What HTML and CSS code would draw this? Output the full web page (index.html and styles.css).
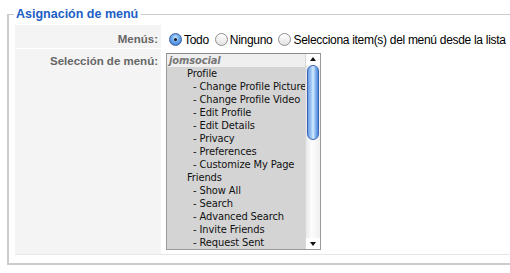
FILE: index.html
```html
<!DOCTYPE html>
<html lang="es">
<head>
<meta charset="utf-8">
<link rel="stylesheet" href="styles.css">
</head>
<body>
<fieldset class="panel">
  <legend class="panel-title">Asignación de menú</legend>
  <div class="form">
    <div class="label">Menús:</div>
    <div class="value radios">
      <span class="radio checked"></span><span class="rtext">Todo</span>
      <span class="radio"></span><span class="rtext">Ninguno</span>
      <span class="radio"></span><span class="rtext">Selecciona item(s) del menú desde la lista</span>
    </div>
    <div class="label label-tall">Selección de menú:</div>
    <div class="value">
      <div class="listbox">
        <div class="options">
          <div class="group">jomsocial</div>
          <div class="opt l1">Profile</div>
          <div class="opt l2">- Change Profile Picture</div>
          <div class="opt l2">- Change Profile Video</div>
          <div class="opt l2">- Edit Profile</div>
          <div class="opt l2">- Edit Details</div>
          <div class="opt l2">- Privacy</div>
          <div class="opt l2">- Preferences</div>
          <div class="opt l2">- Customize My Page</div>
          <div class="opt l1">Friends</div>
          <div class="opt l2">- Show All</div>
          <div class="opt l2">- Search</div>
          <div class="opt l2">- Advanced Search</div>
          <div class="opt l2">- Invite Friends</div>
          <div class="opt l2">- Request Sent</div>
        </div>
        <div class="scrollbar">
          <div class="arrow up"></div>
          <div class="track"><div class="thumb"></div></div>
          <div class="arrow down"></div>
        </div>
      </div>
    </div>
  </div>
</fieldset>
</body>
</html>
```
FILE: styles.css
```css
html, body {
  margin: 0;
  padding: 0;
  background: #fff;
}
body {
  font-family: "Liberation Sans", Arial, sans-serif;
  width: 510px;
  height: 273px;
  overflow: hidden;
}
.panel {
  margin: 7px 0 0 7px;
  padding: 4px 0 8px 6px;
  border: 0;
  border-top: 1px solid #cccccc;
  border-left: 2px solid #cccccc;
  border-bottom: 2px solid #cccccc;
  width: 520px;
  box-sizing: border-box;
  min-width: 0;
}
.panel-title {
  font-size: 12.5px;
  font-weight: bold;
  color: #1c5ec6;
  padding: 0 3px 0 2px;
  margin-left: -1px;
}
.form {
  display: grid;
  grid-template-columns: 146px 1fr;
  row-gap: 1px;
  column-gap: 1px;
  border-bottom: 1px solid #e6e6e6;
}
.label {
  background: #f4f4f4;
  color: #666;
  font-weight: bold;
  font-size: 11.5px;
  text-align: right;
  padding-right: 3px;
  height: 23px;
  line-height: 29px;
}
.label-tall {
  height: 205px;
  line-height: 24px;
}
.value {
  padding-left: 4px;
}
.radios {
  display: flex;
  align-items: center;
  font-size: 12px;
  letter-spacing: -0.3px;
  color: #000;
  padding-left: 7px;
  height: 23px;
  padding-top: 6px;
  box-sizing: border-box;
  white-space: nowrap;
}
.radio {
  width: 13px;
  height: 13px;
  border-radius: 50%;
  border: 1px solid #8e8e8e;
  background: linear-gradient(#ffffff, #e2e2e2);
  box-sizing: border-box;
  margin-right: 2px;
  position: relative;
  flex: none;
}
.radio.checked {
  border-color: #3a5f9a;
  background: radial-gradient(circle at 50% 35%, #c9e3ff 0, #6aa7ec 45%, #2f6fd0 100%);
}
.radio.checked::after {
  content: "";
  position: absolute;
  left: 4px;
  top: 4px;
  width: 3px;
  height: 3px;
  border-radius: 50%;
  background: #1a1a1a;
}
.rtext {
  margin-right: 6px;
}
.listbox {
  margin-top: 4px;
  width: 155px;
  height: 197px;
  border: 1px solid #9a9a9a;
  border-top-color: #8a8a8a;
  box-sizing: border-box;
  display: flex;
  background: #d4d4d4;
  overflow: hidden;
}
.options {
  flex: 1;
  font-family: "DejaVu Sans Condensed", "Noto Sans", sans-serif;
  font-size: 11px;
  letter-spacing: -0.1px;
  color: #111;
  overflow: hidden;
  white-space: nowrap;
}
.group {
  height: 13px;
  line-height: 14px;
  background: #efefef;
  color: #777;
  font-style: italic;
  font-weight: bold;
  padding-left: 2px;
}
.opt {
  height: 13px;
  line-height: 14px;
}
.l1 { padding-left: 20px; }
.l2 { padding-left: 26px; }
.scrollbar {
  width: 14px;
  flex: none;
  background: #fff;
  display: flex;
  flex-direction: column;
  border-left: 1px solid #d8d8d8;
}
.arrow {
  height: 11px;
  position: relative;
  flex: none;
}
.arrow.up::after, .arrow.down::after {
  content: "";
  position: absolute;
  left: 4px;
  border-left: 3px solid transparent;
  border-right: 3px solid transparent;
}
.arrow.up::after {
  top: 3px;
  border-bottom: 4px solid #111;
}
.arrow.down::after {
  top: 4px;
  border-top: 4px solid #111;
}
.track {
  flex: 1;
  padding: 0 1px;
  background: linear-gradient(90deg, #e8e8e8, #fdfdfd 40%, #f0f0f0);
}
.thumb {
  margin-top: 0;
  height: 75px;
  border-radius: 6px;
  border: 1px solid #3865b6;
  background: linear-gradient(90deg, #6b9de6 0%, #a9cdf7 35%, #d6ebff 50%, #86b6f0 75%, #4f86d8 100%);
  box-sizing: border-box;
}
```
